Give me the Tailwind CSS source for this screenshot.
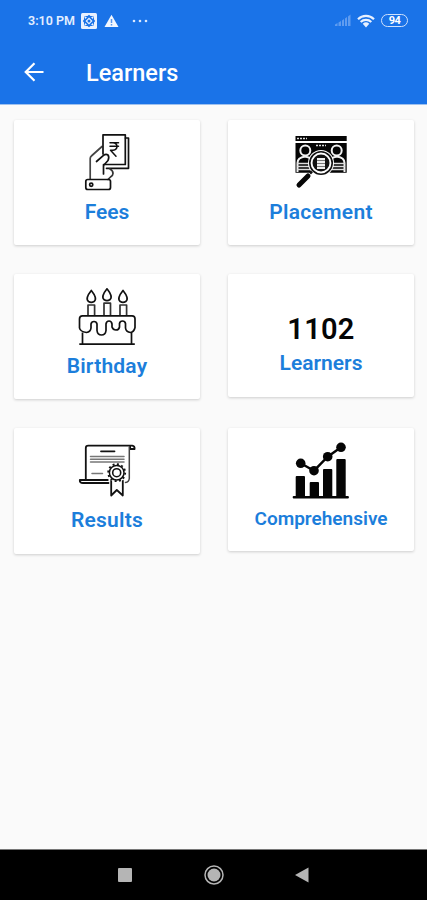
<!DOCTYPE html>
<html lang="en">
<head>
  <meta charset="UTF-8" />
  <meta name="viewport" content="width=device-width, initial-scale=1.0" />
  <title>Learners</title>
  <script src="https://cdn.jsdelivr.net/npm/@tailwindcss/browser@4"></script>
</head>
<body class="bg-[#fafafa] font-['Roboto',sans-serif] h-[900px] flex flex-col overflow-hidden">

<header class="bg-[#1a73e8] h-[105px] shrink-0 text-white border-b border-[#9fc1ee]">
  <!-- Status bar -->
  <div class="flex items-center h-[41px] pl-7 pr-[19px]">
    <span class="text-[12.5px] font-semibold text-[#e3eeff] w-[53px] pt-px whitespace-nowrap">3:10 PM</span>
    <svg class="w-4 h-4" viewBox="0 0 16 16">
      <rect width="16" height="16" rx="1.500" fill="#e8f1ff" />
      <path d="M3 3h3.500L8 1.800 9.500 3H13v3.500L14.200 8 13 9.500V13H9.500L8 14.200 6.500 13H3V9.500L1.800 8 3 6.500z" fill="#1a73e8" />
      <path d="M3 3l3 1.200L4.200 6zM13 3l-1.200 3L10 4.200zM13 13l-3-1.200L11.800 10zM3 13l1.200-3L6 11.800zM8 4.500L11.500 8 8 11.500 4.500 8z" fill="#e8f1ff" />
      <circle cx="8" cy="8" r="1.500" fill="#1a73e8" />
    </svg>
    <svg class="w-[15px] h-[14px] ml-[7px]" viewBox="0 0 15 14">
      <path d="M7.500 .8L14.500 13H.5z" fill="#f2f7ff" />
      <path d="M7.500 5v4M7.500 10v1.500" stroke="#5b97ea" stroke-width="1.500" />
    </svg>
    <svg class="w-4 h-1 ml-[13px]" viewBox="0 0 16 4" fill="#dce9ff">
      <circle cx="2" cy="2" r="1.300" /><circle cx="8" cy="2" r="1.300" /><circle cx="14" cy="2" r="1.300" />
    </svg>
    <svg class="w-4 h-[13px] ml-auto" viewBox="0 0 16 13" fill="#5f9cf0">
      <path d="M0 10.500L2.500 9v3H0zM3.500 8.500L6 7v5H3.500zM7 6.500L9 5v7H7zM10 4.500L12 3v9h-2zM13 2.500L15.500 .5V12H13z" />
    </svg>
    <svg class="w-[18px] h-[14px] ml-[6px]" viewBox="0 0 18 14" fill="none" stroke="#e8f1ff" stroke-width="2.200">
      <path d="M1 5.200a11.500 11.500 0 0 1 16 0M3.700 8a7.600 7.600 0 0 1 10.600 0" />
      <path d="M5.700 9.800a5 5 0 0 1 6.600 0L9 13.500z" fill="#e8f1ff" stroke="none" />
    </svg>
    <span class="w-[27px] h-[13px] ml-[6px] rounded-full border-[1.5px] border-[#cfe1fc] flex items-center justify-center text-[11px] leading-none font-bold tracking-tighter">94</span>
  </div>
  <!-- Toolbar -->
  <div class="flex items-center h-[62px] pl-6">
    <svg class="w-5 h-5" viewBox="0 0 20 20" fill="none" stroke="#fff" stroke-width="2.200">
      <path d="M19.500 10H2M10.500 1.200L1.700 10l8.800 8.800" />
    </svg>
    <h1 class="ml-[42px] pt-[3px] text-[23.5px] font-medium whitespace-nowrap">Learners</h1>
  </div>
</header>

<main class="grow grid grid-cols-[186px_186px] gap-x-7 gap-y-[29px] content-start items-start pl-[14px] pt-[15px]">
  <a class="bg-white h-[125px] rounded-xs shadow-[0_1px_3px_rgba(0,0,0,0.18)] pt-[14px] flex flex-col items-center">
    <svg class="w-14 h-14 overflow-visible" viewBox="0 0 56 56" fill="none" stroke="#111" stroke-width="1.700" stroke-linejoin="round" stroke-linecap="round">
      <path d="M46.500 4h3v30.300h-22" />
      <path d="M11.200 45V24.500q0-1.500 1.200-2.500L23 12.500" stroke="#444" />
      <path d="M24 20V.8h22.300v29.700H24.500" />
      <path d="M17.500 27.500l7-6.200q2.500-1.800 4.500-.3 1.500 2 0 5.500l-4.500 5V40" />
      <path d="M31 35q3 1.500 3 4.500 0 2-2.500 3.500l-2.500 2.500" stroke="#333" />
      <path d="M31 8.800h8.500M31 12.300h8.500M31 8.800h3q4 .5 4 3.600t-4 3.800h-2.500l5.500 6" stroke-width="1.500" />
      <rect x="6.800" y="45.500" width="24.700" height="10" rx="2" />
      <circle cx="12.200" cy="50.700" r="1.600" />
    </svg>
    <span class="mt-[8px] text-[21px] leading-7 font-semibold text-[#1c7edb]">Fees</span>
  </a>

  <a class="bg-white h-[125px] rounded-xs shadow-[0_1px_3px_rgba(0,0,0,0.18)] pt-[14px] flex flex-col items-center">
    <svg class="w-14 h-14 overflow-visible" viewBox="0 0 56 56">
      <path d="M2.500 2h51.200v5H2.500zM2.500 9h51.200v29.800H2.500z" fill="#050505" />
      <path d="M4 4.500h10M23 11.500h10" stroke="#ddd" stroke-width="1.500" stroke-dasharray="2 1" />
      <g fill="#050505" stroke="#f2f2f2" stroke-width="2">
        <path d="M4.500 38V29q0-5.500 7.500-6.500 7.500 1 8 6.500v9M36 38V29q.5-5.500 8-6.500 7.500 1 7.500 6.500v9" />
        <circle cx="12.300" cy="16.500" r="5" />
        <circle cx="43.700" cy="16.500" r="5" />
      </g>
      <path d="M4 29.500h13M4 32.500h13M4 35.500h13M39 29.500h13M39 32.500h13M39 35.500h13" stroke="#ddd" stroke-width="1.500" />
      <circle cx="28" cy="29" r="13" fill="#fff" />
      <circle cx="28" cy="29" r="11.200" fill="#fff" stroke="#111" stroke-width="1.600" />
      <circle cx="28" cy="29" r="8.500" fill="#111" />
      <rect x="24" y="24" width="8" height="11" fill="#eee" />
      <path d="M24 26.500h8M24 29.500h8M24 32.500h8" stroke="#777" />
      <path d="M15 42L6 51" stroke="#050505" stroke-width="5" stroke-linecap="round" />
      <path d="M17 39.500l2-2" stroke="#111" stroke-width="2.500" />
    </svg>
    <span class="mt-[8px] text-[21px] leading-7 font-semibold tracking-[0.015em] text-[#1c7edb]">Placement</span>
  </a>

  <a class="bg-white h-[125px] rounded-xs shadow-[0_1px_3px_rgba(0,0,0,0.18)] pt-[14px] flex flex-col items-center">
    <svg class="w-14 h-14 overflow-visible" viewBox="0 0 56 56" fill="none" stroke="#111" stroke-width="1.700" stroke-linejoin="round">
      <path d="M12.300 2.500q6.500 8 2.800 11-2.800 1.700-5.600 0-3.700-3 2.800-11zM28 .8q6.500 8 2.800 11-2.800 1.700-5.600 0-3.700-3 2.800-11zM44 2.500q6.500 8 2.800 11-2.800 1.700-5.600 0-3.700-3 2.800-11z" />
      <path d="M9 27.500V17h6.600v10.500M25 27.500V15.200h6.500v12.300M41 27.500V17h6.600v10.500" stroke="#333" />
      <path d="M3.500 27.800h49.500q3 0 3 3v8.700q-1 4.500-4.500 5-4.500-.5-5-4.500v-4.500q-.5-2.500-3-2.500t-3 2.500v3.500q-.5 3-3.500 3t-4-3v-3q-.5-3-3-3t-3 3v6.500q-.5 4.500-4.500 4.500t-4.500-4.500V36q-.5-2.500-3-2.500t-3 2.500v4q-.5 4-4.500 4.500Q1 43.500.5 40v-9q0-3.200 3-3.200z" />
      <path d="M3.500 44.500V56M52.500 44.500V56" />
      <path d="M.3 56.200h55.500" />
    </svg>
    <span class="mt-[8px] text-[21px] leading-7 font-semibold tracking-[0.01em] text-[#1c7edb]">Birthday</span>
  </a>

  <a class="bg-white h-[123px] rounded-xs shadow-[0_1px_3px_rgba(0,0,0,0.18)] pt-[37px] flex flex-col items-center">
    <span class="text-[29px] leading-[36px] font-semibold tracking-[0.01em] text-[#050505]">1102</span>
    <span class="mt-[2px] text-[21px] leading-7 font-semibold text-[#1c7edb]">Learners</span>
  </a>

  <a class="bg-white h-[126px] rounded-xs shadow-[0_1px_3px_rgba(0,0,0,0.18)] pt-[14px] flex flex-col items-center">
    <svg class="w-14 h-14 overflow-visible" viewBox="0 0 56 56" fill="none" stroke="#111" stroke-width="1.800" stroke-linejoin="round" stroke-linecap="round">
      <path d="M6.800 37.500V6q0-2.300 2.500-2.300h44q2.500.3 2.300 3.300h-4.500V4" />
      <path d="M50.300 5v31.500q-.3 3.500-3.800 4" stroke="#444" stroke-width="1.500" />
      <path d="M29.500 41H4Q.5 41 .8 38h28" />
      <path d="M22 9.300h13.500" />
      <path d="M11.500 14.500H45M11.500 17.200H45M11.500 20H45M13 31.500h10.500" stroke="#777" stroke-width="1.500" />
      <path d="M32.200 38.500v15l5.600-5.500 6 5.500v-15" fill="#fff" />
      <circle cx="37.700" cy="30.700" r="8.700" fill="#fff" stroke="#fff" stroke-width="2" />
      <circle cx="37.700" cy="30.700" r="7.300" fill="#fff" stroke-width="1.500" />
      <circle cx="37.700" cy="30.700" r="8.500" stroke-width="1.800" stroke-dasharray="2 2.450" stroke-linecap="butt" />
      <circle cx="37.700" cy="30.700" r="4" stroke-width="1.600" />
    </svg>
    <span class="mt-[8px] text-[21px] leading-7 font-semibold tracking-[0.01em] text-[#1c7edb]">Results</span>
  </a>

  <a class="bg-white h-[123px] rounded-xs shadow-[0_1px_3px_rgba(0,0,0,0.18)] pt-[14px] flex flex-col items-center">
    <svg class="w-14 h-14 overflow-visible" viewBox="0 0 56 56" fill="#050505">
      <path d="M2.700 35q0-1 1-1H11q1 0 1 1v20H2.700zM16.700 41q0-1 1-1H25q1 0 1 1v14h-9.300zM30 28q0-1 1-1h7.300q1 0 1 1v27H30zM43.300 18q0-1 1-1h7.400q1 0 1 1v37h-9.400z" />
      <rect x="-.3" y="54" width="56.200" height="2.400" rx="1" />
      <path d="M7.700 21.300L21 28.700l13.700-14L48 5.300" fill="none" stroke="#050505" stroke-width="2.400" />
      <circle cx="7.700" cy="21.300" r="4.800" /><circle cx="21" cy="28.700" r="4.800" />
      <circle cx="34.700" cy="14.700" r="4.800" /><circle cx="48" cy="5.300" r="4.800" />
    </svg>
    <span class="mt-[7px] text-[19px] leading-7 font-semibold text-[#1c7edb]">Comprehensive</span>
  </a>
</main>

<!-- Android navigation -->
<nav class="bg-black h-[51px] shrink-0 border-t border-[#777] grid grid-cols-[81px_96px_80px] justify-center items-center justify-items-center">
  <svg class="w-[14px] h-[14px] mr-px" viewBox="0 0 14 14"><rect width="14" height="14" rx="1" fill="#b5b5b5" /></svg>
  <svg class="w-5 h-5" viewBox="0 0 20 20">
    <circle cx="10" cy="10" r="9" fill="none" stroke="#b5b5b5" stroke-width="1.500" />
    <circle cx="10" cy="10" r="6.500" fill="#b5b5b5" />
  </svg>
  <svg class="w-[14px] h-4" viewBox="0 0 14 16"><path d="M0 8L13.500 .5v15z" fill="#b5b5b5" /></svg>
</nav>

</body>
</html>
